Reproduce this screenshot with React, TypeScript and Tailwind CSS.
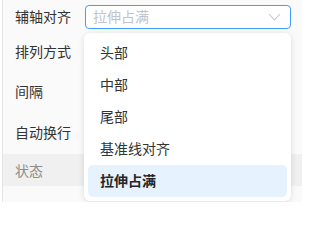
import React from 'react';

const font = { fontFamily: '"Noto Sans CJK SC", "Noto Sans", sans-serif' };

// 其余表单标签（控件被下拉菜单盖住）
const rows = [
  { label: '排列方式', h: 'h-[37px]' },
  { label: '间隔', h: 'h-[42px]' },
  { label: '自动换行', h: 'h-[40px]' },
];

const options = ['头部', '中部', '尾部', '基准线对齐', '拉伸占满'];

export default function App() {
  const selected = '拉伸占满';

  return (
    <div className="relative w-[300px] h-[202px] overflow-hidden bg-[#fafafa] text-[14px] border-l border-[#e4e4e4] ml-[2px]" style={font}>
      <div className="flex flex-col pl-[12px]">
        <div className="h-[33px] flex items-center text-[#333333]">
          <span className="w-[70px]">辅轴对齐</span>
          {/* 选择框 */}
          <div className="relative w-[206px] h-[24px] rounded-[4px] border border-[#409eff] bg-white flex items-center pl-[7px] pr-[9px]">
            <span className="flex-1 text-[#c0c4cc]">拉伸占满</span>
            <svg width="13" height="8" viewBox="0 0 13 8" fill="none">
              <path d="M1 1l5.5 6L12 1" stroke="#c0c4cc" strokeWidth="1.1" />
            </svg>
            {/* 下拉菜单 */}
            <div className="absolute left-[-2px] top-[27px] z-10 w-[207px] rounded-[6px] bg-white shadow-[0_1px_6px_rgba(0,0,0,0.12)] p-[4px] flex flex-col">
              {options.map((o) => (
                <div
                  key={o}
                  className={
                    o === selected
                      ? 'h-[32px] flex items-center pl-[12px] rounded-[5px] bg-[#e6f3ff] font-semibold text-[#262626]'
                      : 'h-[32px] flex items-center pl-[12px] text-[#333333]'
                  }
                >
                  {o}
                </div>
              ))}
            </div>
          </div>
        </div>
        {rows.map((r) => (
          <div key={r.label} className={`${r.h} flex items-center text-[#333333]`}>
            {r.label}
          </div>
        ))}
      </div>
      <div className="mt-[2px] h-[32px] flex items-center pl-[12px] bg-[#f0f0f0] text-[#8c8c8c]">
        状态
      </div>
      <div className="flex pl-[237px]">
        <div className="w-[22px] h-[6px] rounded-sm border border-[#dcdcdc] bg-white" />
      </div>
    </div>
  );
}
